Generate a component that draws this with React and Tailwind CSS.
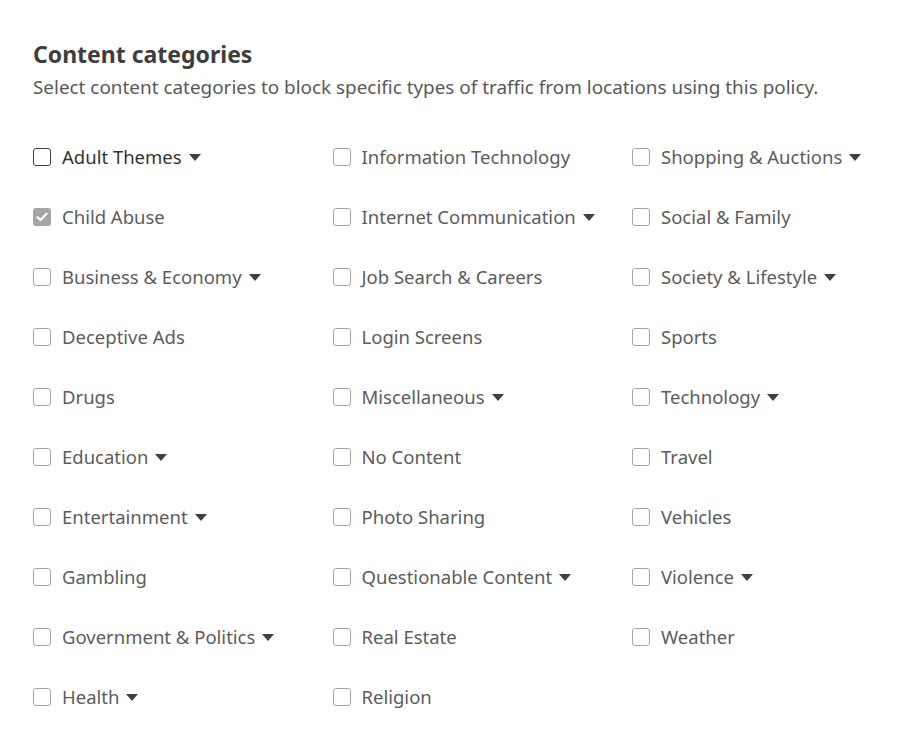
import React from "react";

const cols = [
  [
    ["Adult Themes", true],
    ["Child Abuse", false],
    ["Business & Economy", true],
    ["Deceptive Ads", false],
    ["Drugs", false],
    ["Education", true],
    ["Entertainment", true],
    ["Gambling", false],
    ["Government & Politics", true],
    ["Health", true],
  ],
  [
    ["Information Technology", false],
    ["Internet Communication", true],
    ["Job Search & Careers", false],
    ["Login Screens", false],
    ["Miscellaneous", true],
    ["No Content", false],
    ["Photo Sharing", false],
    ["Questionable Content", true],
    ["Real Estate", false],
    ["Religion", false],
  ],
  [
    ["Shopping & Auctions", true],
    ["Social & Family", false],
    ["Society & Lifestyle", true],
    ["Sports", false],
    ["Technology", true],
    ["Travel", false],
    ["Vehicles", false],
    ["Violence", true],
    ["Weather", false],
  ],
];

function Caret() {
  return (
    <svg width="12" height="7" viewBox="0 0 12 7" className="ml-[7px] mt-[1px] shrink-0">
      <path d="M0 0 L12 0 L6 7 Z" fill="#404040" />
    </svg>
  );
}

function Item({ label, caret, focused, checked }) {
  return (
    <div className="flex items-center h-[60px]">
      {checked ? (
        <div className="w-[18px] h-[18px] shrink-0 rounded-[3px] bg-[#a6a6a6] flex items-center justify-center">
          <svg width="12" height="10" viewBox="0 0 12 10">
            <path d="M1.5 5.2 L4.5 8 L10.5 1.8" stroke="white" strokeWidth="2.2" fill="none" strokeLinecap="round" strokeLinejoin="round" />
          </svg>
        </div>
      ) : (
        <div
          className={
            "w-[18px] h-[18px] shrink-0 rounded-[3px] border bg-white " +
            (focused ? "border-[#404040]" : "border-[#a6a6a6]")
          }
        />
      )}
      <span
        className={
          "ml-[11px] text-[18.5px] leading-none whitespace-nowrap " +
          (focused ? "text-[#333333]" : "text-[#5c5c5c]")
        }
      >
        {label}
      </span>
      {caret && <Caret />}
    </div>
  );
}

export default function App() {
  return (
    <div
      className="w-[906px] h-[732px] bg-white pl-[33px] pt-[38px] overflow-hidden"
      style={{ fontFamily: '"Noto Sans", "Open Sans", sans-serif' }}
    >
      <h2 className="text-[23px] font-bold text-[#3d3d3d] leading-[32px]">Content categories</h2>
      <p className="text-[18.9px] text-[#595959] leading-[24px] mt-[5px] whitespace-nowrap">
        Select content categories to block specific types of traffic from locations using this policy.
      </p>
      <div className="flex mt-[28px]">
        {cols.map((col, ci) => (
          <div key={ci} className="w-[299.5px] shrink-0 flex flex-col">
            {col.map(([label, caret], i) => (
              <Item
                key={label}
                label={label}
                caret={caret}
                focused={ci === 0 && i === 0}
                checked={ci === 0 && i === 1}
              />
            ))}
          </div>
        ))}
      </div>
    </div>
  );
}
